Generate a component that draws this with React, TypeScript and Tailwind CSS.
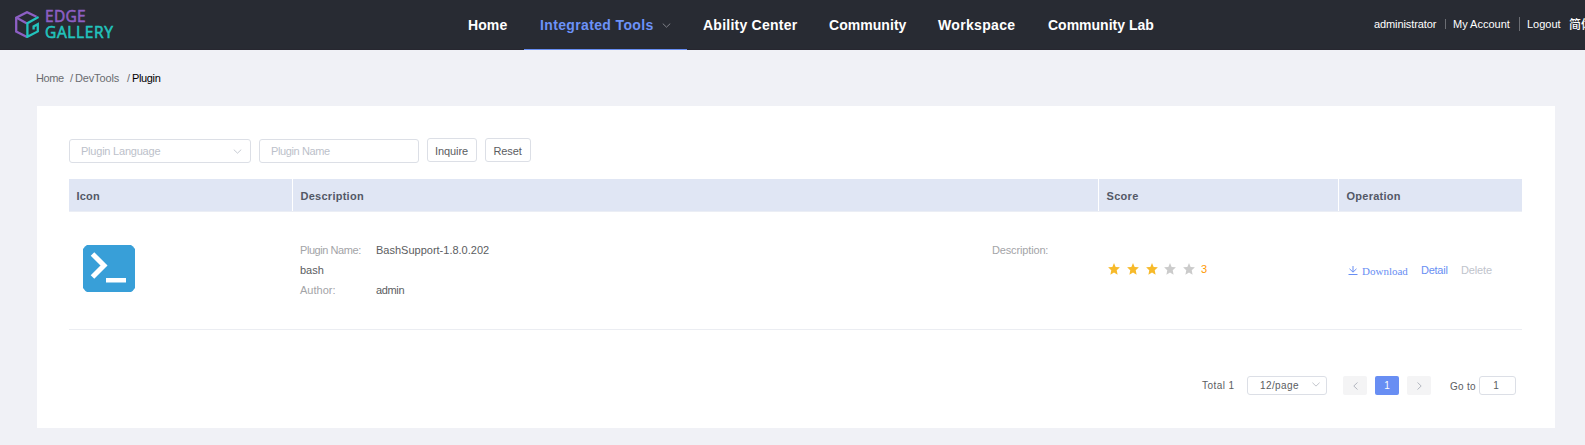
import React from "react";

type TProps = { x: string; children: React.ReactNode };

function Chevron({ className }: { className: string }) {
  return (
    <svg viewBox="0 0 10 6" className={className} fill="none" stroke="currentColor" strokeWidth="1">
      <path d="M0.5 0.7 5 5 9.5 0.7" />
    </svg>
  );
}

function Side({ right }: { right?: boolean }) {
  return (
    <svg viewBox="0 0 5 8" className="h-[8px] w-[5px]" fill="none" stroke="#b4b8c0" strokeWidth="1">
      <path d={right ? "M0.5 0.5 4.2 4 0.5 7.5" : "M4.5 0.5 0.8 4 4.5 7.5"} />
    </svg>
  );
}

function T({ x, children }: TProps) {
  return <span className={"block whitespace-nowrap " + x}>{children}</span>;
}

function Logo() {
  return (
    <div className="flex h-[50px] w-[452px] shrink-0 pl-[15px] pt-[11px]">
      <svg viewBox="0 0 24 27" className="h-[27px] w-[24px]" fill="none" strokeWidth="2.3">
        <path d="M21.5 5.8 12 1.2 1.2 6.6V20.6L12 26" stroke="#8d5fc4" />
        <path d="M1.2 6.6 12 12.6" stroke="#8d5fc4" />
        <path d="M23.6 6 12.4 12.2V25.8L22.8 20.4V13.2L18.6 15.4V18.4" stroke="#22c3bd" />
      </svg>
      <div className="ml-[6px] -mt-[3px] font-['Open_Sans'] text-[15.5px] font-medium leading-[16px]">
        <T x="text-[#8d5fc4] tracking-[0.3px] [-webkit-text-stroke:0.6px_#8d5fc4]">EDGE</T>
        <T x="text-[#22c3bd] tracking-[0.65px] [-webkit-text-stroke:0.6px_#22c3bd]">GALLERY</T>
      </div>
    </div>
  );
}

function Star({ on }: { on: boolean }) {
  return (
    <svg viewBox="0.5 0.5 11 11" className={on ? "h-[12px] w-[12px] text-[#f7ba2a]" : "-ml-px mr-px h-[12px] w-[12px] text-[#cbcbcb]"} fill="currentColor">
      <path d="M6 .6 7.5 4.2 11.4 4.5 8.5 7.1 9.3 11.2 6 9.1 2.7 11.2 3.5 7.1 .6 4.5 4.5 4.2Z" />
    </svg>
  );
}

export default function App() {
  return (
    <div className="h-[445px] w-[1585px] overflow-hidden bg-[#f0f1f6] font-['Liberation_Sans','Noto_Sans_CJK_SC',sans-serif] text-[11px] leading-[20px] text-[#5b5d61]">
      <header className="flex h-[50px] border-b border-[#272730] bg-[#282b33] text-white">
        <Logo />
        <nav className="flex h-[50px] shrink-0 text-[14px] font-bold leading-[50px]">
          <div className="w-[72px] pl-[16px]"><T x="tracking-[0.1px]">Home</T></div>
          <div className="flex w-[163px] items-center border-b border-[#688ef3] pl-[16px] text-[#6c92f8]">
            <T x="tracking-[0.36px]">Integrated Tools</T>
            <Chevron className="ml-[8px] mt-[2px] h-[5px] w-[9px] text-[#909399]" />
          </div>
          <div className="w-[126px] pl-[16px]"><T x="tracking-[0.24px]">Ability Center</T></div>
          <div className="w-[109px] pl-[16px]"><T x="tracking-[0.05px]">Community</T></div>
          <div className="w-[110px] pl-[16px]"><T x="tracking-[0.33px]">Workspace</T></div>
          <div className="w-[342px] pl-[16px]"><T x="tracking-[0px]">Community Lab</T></div>
        </nav>
        <div className="flex h-[48px] shrink-0 items-center">
          <div className="w-[71px]"><T x="tracking-[-0.1px]">administrator</T></div>
          <div className="h-[10px] w-px bg-[#6b6d73]" />
          <div className="ml-[7px] w-[66px]"><T x="">My Account</T></div>
          <div className="h-[14px] w-px bg-[#6b6d73]" />
          <div className="ml-[7px] w-[42px]"><T x="">Logout</T></div>
          <T x="mt-px text-[12px] font-medium">简体</T>
        </div>
      </header>

      <div className="flex h-[56px] pl-[36px] pt-[18px] text-[#6a6c70]">
        <div className="w-[34px]"><T x="tracking-[-0.4px]">Home</T></div>
        <div className="w-[5px]">/</div>
        <div className="w-[52px]"><T x="tracking-[-0.15px]">DevTools</T></div>
        <div className="w-[5px]">/</div>
        <T x="text-black tracking-[-0.35px]">Plugin</T>
      </div>

      <main className="ml-[37px] h-[322px] w-[1518px] bg-white pl-[32px] pt-[32px]">
        <div className="flex">
          <div className="mt-px flex h-[24px] w-[182px] items-center justify-between rounded-[3px] border border-[#dcdfe6] pl-[11px] pr-[8px] text-[#bcc1ca]">
            <T x="tracking-[-0.22px]">Plugin Language</T>
            <Chevron className="h-[5px] w-[9px]" />
          </div>
          <div className="ml-[8px] mt-px flex h-[24px] w-[160px] items-center rounded-[3px] border border-[#dcdfe6] pl-[11px] text-[#bcc1ca]">
            <T x="tracking-[-0.38px]">Plugin Name</T>
          </div>
          <div className="ml-[8px] flex h-[24px] w-[50px] items-center justify-center rounded-[3px] border border-[#dcdfe6]"><T x="pt-[2px] pr-px tracking-[-0.1px]">Inquire</T></div>
          <div className="ml-[8px] flex h-[24px] w-[46px] items-center justify-center rounded-[3px] border border-[#dcdfe6]"><T x="pt-[2px] pr-px tracking-[-0.1px]">Reset</T></div>
        </div>

        <div className="mt-[16px] flex h-[33px] w-[1453px] border-b border-[#ebeef5] font-bold leading-[34px] text-[#535866]">
          <div className="w-[224px] border-r border-white bg-[#e0e6f4] pl-[7.5px]"><T x="tracking-[0.2px]">Icon</T></div>
          <div className="w-[806px] border-r border-white bg-[#e0e6f4] pl-[7.5px]"><T x="tracking-[0.26px]">Description</T></div>
          <div className="w-[240px] border-r border-white bg-[#e0e6f4] pl-[7.5px]"><T x="tracking-[0.3px]">Score</T></div>
          <div className="w-[183px] bg-[#e0e6f4] pl-[7.5px]"><T x="tracking-[0.25px]">Operation</T></div>
        </div>

        <div className="flex h-[118px] w-[1453px] border-b border-[#ebedf2]">
          <div className="w-[231px] pl-[14px] pt-[33px]">
            <svg viewBox="0 0 52 47" className="h-[47px] w-[52px]">
              <path d="M4 0H48Q50 1 52 4V43Q50 46 48 47H4Q2 46 0 43V4Q2 1 4 0Z" fill="#389fd8" />
              <path d="M9.5 9 21 20.5 9.5 32" fill="none" stroke="white" strokeWidth="5" />
              <path d="M23 33H43V37.5H23Z" fill="white" />
            </svg>
          </div>
          <div className="w-[692px] pt-[28px]">
            <div className="flex"><T x="w-[76px] tracking-[-0.44px] text-[#a3a4a7]">Plugin Name:</T><T x="">BashSupport-1.8.0.202</T></div>
            <T x="">bash</T>
            <div className="flex"><T x="w-[76px] text-[#a3a4a7]">Author:</T><T x="tracking-[-0.35px]">admin</T></div>
          </div>
          <T x="w-[116px] pt-[28px] tracking-[-0.15px] text-[#a3a4a7]">Description:</T>
          <div className="flex w-[240px] gap-[7px] pt-[51px]">
            <Star on /><Star on /><Star on /><Star on={false} /><Star on={false} />
            <T x="-ml-[2px] -mt-[4px] text-[#ff9900]">3</T>
          </div>
          <div className="flex pt-[48px] text-[#688ef3]">
            <svg viewBox="0 0 10 9" className="mr-[4px] mt-[6px] h-[9px] w-[10px]" fill="none" stroke="currentColor">
              <path d="M5 0V6M1.5 2.8 5 6.2 8.5 2.8M0.5 8.5H9.5" />
            </svg>
            <T x="w-[59px] pt-px font-['Liberation_Serif']">Download</T>
            <T x="w-[40px] tracking-[-0.25px]">Detail</T>
            <T x="text-[#c0c4cc] tracking-[-0.15px]">Delete</T>
          </div>
        </div>

        <div className="mt-[46px] flex h-[19px] pl-[1133px] text-[10px] leading-[19px]">
          <div className="w-[45px]"><T x="tracking-[0.45px]">Total 1</T></div>
          <div className="flex w-[80px] justify-between rounded-[3px] border border-[#dcdfe6] pl-[12px] pr-[6px] leading-[18px]">
            <T x="tracking-[0.4px]">12/page</T>
            <Chevron className="mt-[5px] h-[5px] w-[8px] text-[#b4b8c0]" />
          </div>
          <div className="ml-[16px] flex w-[24px] items-center justify-center rounded-[2px] bg-[#f4f4f5]"><Side /></div>
          <div className="ml-[8px] w-[24px] rounded-[2px] bg-[#688ef3] text-center text-white">1</div>
          <div className="ml-[8px] flex w-[24px] items-center justify-center rounded-[2px] bg-[#f4f4f5]"><Side right /></div>
          <div className="ml-[19px] w-[29px] pt-px"><T x="tracking-[0.3px]">Go to</T></div>
          <div className="w-[37px] rounded-[3px] border border-[#dcdfe6] pr-[3px] text-center leading-[17px]">1</div>
        </div>
      </main>
    </div>
  );
}
